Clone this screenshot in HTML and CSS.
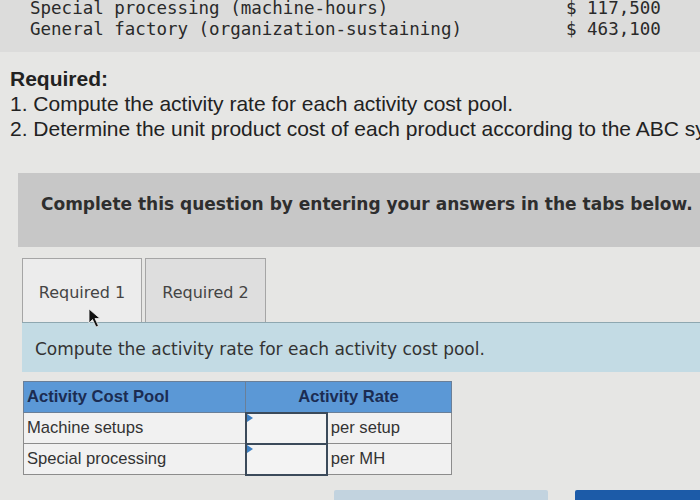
FILE: index.html
```html
<!DOCTYPE html>
<html>
<head>
<meta charset="utf-8">
<link rel="stylesheet" href="styles.css">
</head>
<body>
<div class="costs">
  <div class="cost-row"><span>Special processing (machine-hours)</span><span>$ 117,500</span></div>
  <div class="cost-row"><span>General factory (organization-sustaining)</span><span>$ 463,100</span></div>
</div>
<div class="required">
  <div class="req-title">Required:</div>
  <div>1. Compute the activity rate for each activity cost pool.</div>
  <div class="nowrap">2. Determine the unit product cost of each product according to the ABC system.</div>
</div>
<div class="notice">Complete this question by entering your answers in the tabs below.</div>
<div class="tabs">
  <div class="tab active">Required 1</div>
  <div class="tab">Required 2</div>
  <svg class="cursor" width="14" height="22" viewBox="0 0 14 22"><path d="M1 1 L1 15 L4.5 11.5 L8 19 L10.5 18 L7 10.5 L12 10.5 Z" fill="#111" stroke="#eee" stroke-width="0.8"/></svg>
</div>
<div class="panel">Compute the activity rate for each activity cost pool.</div>
<table class="rates">
  <tr class="head"><th class="c1">Activity Cost Pool</th><th colspan="2" class="center">Activity Rate</th></tr>
  <tr><td class="c1">Machine setups</td><td class="input"><span class="flag"></span></td><td class="unit">per setup</td></tr>
  <tr><td class="c1">Special processing</td><td class="input"><span class="flag"></span></td><td class="unit">per MH</td></tr>
</table>
<div class="buttons">
  <div class="btn-light"></div>
  <div class="btn-dark"></div>
</div>
</body>
</html>
```
FILE: styles.css
```css
html, body {
  margin: 0;
  padding: 0;
  overflow: hidden;
}
body {
  width: 700px;
  height: 500px;
  background: #e6e6e4;
  font-family: "Liberation Sans", Arial, sans-serif;
  color: #222;
}
.costs {
  background: #dcdcdb;
  height: 52px;
  font-family: "DejaVu Sans Mono", monospace;
  font-size: 17.5px;
  line-height: 21px;
  color: #2a2a2a;
}
.cost-row {
  display: grid;
  grid-template-columns: 536px auto;
  padding-left: 30px;
  position: relative;
  top: -2px;
}
.required {
  padding-left: 10px;
  margin-top: 14px;
  font-size: 21px;
  line-height: 25px;
  color: #222;
  overflow: hidden;
}
.nowrap { white-space: nowrap; }
.req-title { font-weight: bold; }
.notice {
  margin-top: 32px;
  margin-left: 18px;
  height: 62px;
  padding-bottom: 12px;
  background: #c7c7c7;
  display: flex;
  align-items: center;
  padding-left: 23px;
  font-family: "DejaVu Sans", Verdana, sans-serif;
  font-weight: bold;
  font-size: 17px;
  color: #2e2e2e;
  white-space: nowrap;
  overflow: hidden;
}
.tabs {
  display: flex;
  gap: 3px;
  margin-top: 11px;
  margin-left: 22px;
  position: relative;
  height: 64px;
}
.tab {
  box-sizing: border-box;
  width: 121px;
  height: 64px;
  border: 1px solid #a5a5a5;
  border-bottom: none;
  background: #dedede;
  font-family: "DejaVu Sans", Verdana, sans-serif;
  font-size: 16px;
  color: #444;
  display: flex;
  justify-content: center;
  padding-top: 24px;
}
.tab.active {
  width: 120px;
  background: #ececec;
}
.cursor {
  position: absolute;
  left: 66px;
  top: 50px;
}
.panel {
  margin-left: 22px;
  height: 47px;
  padding-top: 2px;
  background: #c3dbe4;
  border-top: 1px solid #8ea7b0;
  display: flex;
  align-items: center;
  padding-left: 13px;
  font-family: "DejaVu Sans", Verdana, sans-serif;
  font-size: 17px;
  color: #333;
}
.rates {
  margin-top: 9px;
  margin-left: 23px;
  border-collapse: collapse;
  width: 429px;
  font-size: 16.6px;
}
.rates th, .rates td {
  border: 1px solid #8c8c8c;
  padding: 0 3px;
  text-align: left;
}
.rates .head {
  background: #5b98d6;
  height: 31px;
}
.rates th {
  color: #1b2c52;
  font-weight: bold;
  border-color: #6a7f98;
}
.rates th.center { text-align: center; }
.rates tr { height: 31px; }
.rates td { background: #f1f1f1; color: #333; }
.rates .c1 { width: 216px; }
.rates td.input {
  width: 74px;
  border: 2px solid #3b4a5a;
  position: relative;
  background: #f3f3f3;
}
.flag {
  position: absolute;
  left: 0;
  top: 0;
  width: 0;
  height: 0;
  border-top: 4px solid transparent;
  border-bottom: 4px solid transparent;
  border-left: 6px solid #3d7fc2;
}
.rates td.unit { width: 118px; }
.buttons {
  display: flex;
  gap: 27px;
  margin-left: 334px;
  margin-top: 14px;
}
.btn-light {
  width: 214px;
  height: 14px;
  background: #c2d3df;
  border-radius: 2px;
}
.btn-dark {
  flex: 1;
  height: 14px;
  background: #1c5ba8;
  border-radius: 2px 0 0 0;
}
```
